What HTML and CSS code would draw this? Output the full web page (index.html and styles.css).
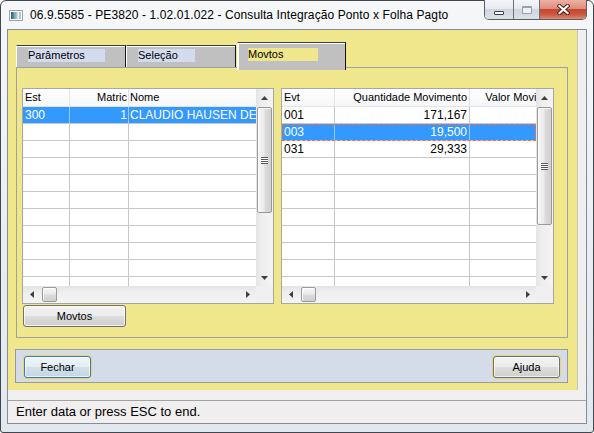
FILE: index.html
```html
<!DOCTYPE html>
<html lang="pt">
<head>
<meta charset="utf-8">
<title>Consulta Integração Ponto x Folha Pagto</title>
<link rel="stylesheet" href="styles.css">
</head>
<body>
<div class="window">
  <div class="titlebar">
    <svg class="app-icon" width="14" height="11" viewBox="0 0 14 11">
      <defs>
        <linearGradient id="ig" x1="0" y1="0" x2="1" y2="0">
          <stop offset="0" stop-color="#245e73"/>
          <stop offset="1" stop-color="#c4e6ea"/>
        </linearGradient>
      </defs>
      <rect x="0.5" y="0.5" width="13" height="10" fill="#fdfdfd" stroke="#9aa3ab"/>
      <rect x="2" y="2" width="7" height="7" fill="url(#ig)"/>
      <rect x="10" y="2" width="2" height="7" fill="#b9c3cb"/>
    </svg>
    <span class="title">06.9.5585 - PE3820 - 1.02.01.022 - Consulta Integração Ponto x Folha Pagto</span>
    <div class="controls">
      <div class="ctl ctl-min"><span class="glyph-min"></span></div>
      <div class="ctl ctl-max"><span class="glyph-max"></span></div>
      <div class="ctl ctl-close">
        <svg width="13" height="11" viewBox="0 0 13 11">
          <path d="M2.5 2 L10.5 9 M10.5 2 L2.5 9" stroke="#4b2019" stroke-width="4.2" stroke-linecap="square"/>
          <path d="M2.5 2 L10.5 9 M10.5 2 L2.5 9" stroke="#ffffff" stroke-width="2.2" stroke-linecap="square"/>
        </svg>
      </div>
    </div>
  </div>

  <div class="client">
    <div class="main-row">
      <div class="yellow">
        <div class="tabs">
          <div class="tab tab-1"><span class="tab-label lbl-1">Parâmetros</span></div>
          <div class="tab tab-2"><span class="tab-label lbl-2">Seleção</span></div>
          <div class="tab tab-active"><span class="tab-label lbl-3">Movtos</span></div>
        </div>

        <div class="page">
          <div class="left-col">
            <div class="grid grid-left">
              <div class="grid-top">
                <div class="table">
                  <div class="hrow">
                    <div class="cell c-est">Est</div>
                    <div class="cell c-mat r">Matric</div>
                    <div class="cell c-nome">Nome</div>
                  </div>
                  <div class="row sel">
                    <div class="cell c-est">300</div>
                    <div class="cell c-mat r">1</div>
                    <div class="cell c-nome">CLAUDIO HAUSEN DE</div>
                  </div>
                  <div class="row"><div class="cell c-est"></div><div class="cell c-mat"></div><div class="cell c-nome"></div></div>
                  <div class="row"><div class="cell c-est"></div><div class="cell c-mat"></div><div class="cell c-nome"></div></div>
                  <div class="row"><div class="cell c-est"></div><div class="cell c-mat"></div><div class="cell c-nome"></div></div>
                  <div class="row"><div class="cell c-est"></div><div class="cell c-mat"></div><div class="cell c-nome"></div></div>
                  <div class="row"><div class="cell c-est"></div><div class="cell c-mat"></div><div class="cell c-nome"></div></div>
                  <div class="row"><div class="cell c-est"></div><div class="cell c-mat"></div><div class="cell c-nome"></div></div>
                  <div class="row"><div class="cell c-est"></div><div class="cell c-mat"></div><div class="cell c-nome"></div></div>
                  <div class="row"><div class="cell c-est"></div><div class="cell c-mat"></div><div class="cell c-nome"></div></div>
                  <div class="row"><div class="cell c-est"></div><div class="cell c-mat"></div><div class="cell c-nome"></div></div>
                  <div class="row"><div class="cell c-est"></div><div class="cell c-mat"></div><div class="cell c-nome"></div></div>
                </div>
                <div class="vscroll">
                  <div class="sb-btn"><svg width="7" height="4" viewBox="0 0 7 4"><path d="M0 4 L3.5 0 L7 4Z" fill="#3f3f3f"/></svg></div>
                  <div class="vtrack"><div class="thumb thumb-l"><span class="grip-v"></span></div></div>
                  <div class="sb-btn"><svg width="7" height="4" viewBox="0 0 7 4"><path d="M0 0 L3.5 4 L7 0Z" fill="#3f3f3f"/></svg></div>
                </div>
              </div>
              <div class="grid-bottom">
                <div class="hscroll">
                  <div class="hbtn"><svg width="4" height="7" viewBox="0 0 4 7"><path d="M4 0 L0 3.5 L4 7Z" fill="#3f3f3f"/></svg></div>
                  <div class="htrack"><div class="hthumb"></div></div>
                  <div class="hbtn"><svg width="4" height="7" viewBox="0 0 4 7"><path d="M0 0 L4 3.5 L0 7Z" fill="#3f3f3f"/></svg></div>
                </div>
                <div class="corner"></div>
              </div>
            </div>
            <button class="btn btn-movtos">Movtos</button>
          </div>

          <div class="grid grid-right">
            <div class="grid-top">
              <div class="table">
                <div class="hrow">
                  <div class="cell c-evt">Evt</div>
                  <div class="cell c-qtd r">Quantidade Movimento</div>
                  <div class="cell c-val r">Valor Movimento</div>
                </div>
                <div class="row">
                  <div class="cell c-evt">001</div>
                  <div class="cell c-qtd r">171,167</div>
                  <div class="cell c-val r"></div>
                </div>
                <div class="row sel focus">
                  <div class="cell c-evt">003</div>
                  <div class="cell c-qtd r">19,500</div>
                  <div class="cell c-val r"></div>
                </div>
                <div class="row">
                  <div class="cell c-evt">031</div>
                  <div class="cell c-qtd r">29,333</div>
                  <div class="cell c-val r"></div>
                </div>
                <div class="row"><div class="cell c-evt"></div><div class="cell c-qtd"></div><div class="cell c-val"></div></div>
                <div class="row"><div class="cell c-evt"></div><div class="cell c-qtd"></div><div class="cell c-val"></div></div>
                <div class="row"><div class="cell c-evt"></div><div class="cell c-qtd"></div><div class="cell c-val"></div></div>
                <div class="row"><div class="cell c-evt"></div><div class="cell c-qtd"></div><div class="cell c-val"></div></div>
                <div class="row"><div class="cell c-evt"></div><div class="cell c-qtd"></div><div class="cell c-val"></div></div>
                <div class="row"><div class="cell c-evt"></div><div class="cell c-qtd"></div><div class="cell c-val"></div></div>
                <div class="row"><div class="cell c-evt"></div><div class="cell c-qtd"></div><div class="cell c-val"></div></div>
                <div class="row"><div class="cell c-evt"></div><div class="cell c-qtd"></div><div class="cell c-val"></div></div>
              </div>
              <div class="vscroll">
                <div class="sb-btn"><svg width="7" height="4" viewBox="0 0 7 4"><path d="M0 4 L3.5 0 L7 4Z" fill="#3f3f3f"/></svg></div>
                <div class="vtrack"><div class="thumb thumb-r"><span class="grip-v"></span></div></div>
                <div class="sb-btn"><svg width="7" height="4" viewBox="0 0 7 4"><path d="M0 0 L3.5 4 L7 0Z" fill="#3f3f3f"/></svg></div>
              </div>
            </div>
            <div class="grid-bottom">
              <div class="hscroll">
                <div class="hbtn"><svg width="4" height="7" viewBox="0 0 4 7"><path d="M4 0 L0 3.5 L4 7Z" fill="#3f3f3f"/></svg></div>
                <div class="htrack"><div class="hthumb"></div></div>
                <div class="hbtn"><svg width="4" height="7" viewBox="0 0 4 7"><path d="M0 0 L4 3.5 L0 7Z" fill="#3f3f3f"/></svg></div>
              </div>
              <div class="corner"></div>
            </div>
          </div>
        </div>

        <div class="panel">
          <button class="btn btn-dlg btn-focus">Fechar</button>
          <button class="btn btn-dlg">Ajuda</button>
        </div>
      </div>
      <div class="side"></div>
    </div>
    <div class="gap"></div>
    <div class="status">Enter data or press ESC to end.</div>
  </div>
</div>
</body>
</html>
```

FILE: styles.css
```css
html, body {
  margin: 0;
  padding: 0;
}
body {
  width: 594px;
  height: 433px;
  overflow: hidden;
  background: #ffffff;
  font-family: "Liberation Sans", Arial, sans-serif;
  color: #000;
}

/* ---------- window frame ---------- */
.window {
  box-sizing: border-box;
  width: 594px;
  height: 433px;
  border: 1px solid #41474c;
  border-radius: 6px 6px 3px 3px;
  background: linear-gradient(#f5f7f9, #e9edf2 60%, #e2e8ee);
  padding: 0 6px 8px;
  display: flex;
  flex-direction: column;
}

.titlebar {
  height: 28px;
  margin: 0 -6px;
  display: flex;
  align-items: center;
  flex: none;
}
.app-icon {
  flex: none;
  margin-left: 8px;
  display: block;
}
.title {
  margin-left: 7px;
  font-size: 12px;
  letter-spacing: 0.1px;
  white-space: nowrap;
  color: #000;
}

.controls {
  margin-left: auto;
  margin-right: 6px;
  margin-top: -1px;
  align-self: flex-start;
  display: flex;
  height: 20px;
  box-sizing: border-box;
  border: 1px solid #5a5e63;
  border-top: none;
  border-radius: 0 0 5px 5px;
  overflow: hidden;
  flex: none;
}
.ctl {
  display: flex;
  align-items: center;
  justify-content: center;
}
.ctl-min,
.ctl-max {
  border-right: 1px solid #6c7177;
  background: linear-gradient(#f4f6f9, #e6eaef 45%, #cfd6df 50%, #dbe1e8);
}
.ctl-min { width: 28px; }
.ctl-max { width: 25px; }
.ctl-close {
  width: 46px;
  background: linear-gradient(#ebb3a5, #de8c7b 45%, #c9472f 50%, #c9553f 75%, #e08a74);
}
.glyph-min {
  box-sizing: border-box;
  width: 10px;
  height: 4px;
  margin-top: 6px;
  background: #fff;
  border: 1px solid #3b4046;
  border-radius: 1px;
}
.glyph-max {
  box-sizing: border-box;
  width: 10px;
  height: 8px;
  border: 1px solid #98a1aa;
  border-top-width: 2px;
  background: #eef1f4;
  border-radius: 1px;
}
.ctl-close svg { display: block; }

/* ---------- client ---------- */
.client {
  flex: 1;
  border: 1px solid #858c93;
  background: #f0f0f0;
  display: flex;
  flex-direction: column;
  min-height: 0;
}
.main-row {
  height: 360px;
  flex: none;
  display: flex;
}
.yellow {
  box-sizing: border-box;
  width: 569px;
  flex: none;
  background: #f0e68c;
  padding: 12px 0 0 8px;
  display: flex;
  flex-direction: column;
}
.side {
  flex: 1;
  border-left: 1px solid #c4c4c4;
  background: #f0f0f0;
}
.gap {
  height: 10px;
  flex: none;
}
.status {
  flex: 1;
  border-top: 1px solid #a3a3a3;
  background: #f0eeee;
  font-size: 13px;
  line-height: 22px;
  padding-left: 8px;
  white-space: nowrap;
}

/* ---------- tabs ---------- */
.tabs {
  display: flex;
  align-items: flex-end;
  height: 25px;
  flex: none;
}
.tab {
  box-sizing: border-box;
  height: 22px;
  background: #c0c0c0;
  border-top: 1px solid #3c3c3c;
  border-left: 1px solid #ffffff;
  border-right: 1px solid #151515;
  box-shadow: inset 0 1px 0 #ffffff;
  padding: 3px 0 0 11px;
  flex: none;
}
.tab-1 { width: 110px; }
.tab-2 { width: 110px; }
.tab-active {
  width: 109px;
  height: 28px;
  margin-left: 1px;
  margin-bottom: -3px;
  padding: 5px 0 0 10px;
  position: relative;
  z-index: 1;
  box-shadow: inset 1px 1px 0 #ffffff;
}
.tab-label {
  display: block;
  height: 13px;
  line-height: 13px;
  font-size: 11px;
  background: #d3dcef;
  white-space: nowrap;
}
.lbl-1 { width: 77px; }
.lbl-2 { width: 57px; }
.lbl-3 { width: 70px; background: #f0e68c; }

/* ---------- tab page ---------- */
.page {
  box-sizing: border-box;
  width: 552px;
  height: 271px;
  flex: none;
  border: 1px solid #a0a0a0;
  padding: 20px 0 0 5px;
  display: flex;
  align-items: flex-start;
}
.left-col {
  width: 252px;
  flex: none;
  display: flex;
  flex-direction: column;
  align-items: flex-start;
}

/* ---------- grids ---------- */
.grid {
  box-sizing: border-box;
  height: 216px;
  flex: none;
  border: 1px solid #a6a6a6;
  background: #ffffff;
  display: flex;
  flex-direction: column;
}
.grid-left { width: 252px; }
.grid-right { width: 273px; margin-left: 7px; }

.grid-top {
  height: 197px;
  flex: none;
  display: flex;
}
.table {
  flex: 1;
  min-width: 0;
  overflow: hidden;
}
.hrow {
  display: flex;
  height: 17px;
  border-bottom: 1px solid #e3e3e3;
  background: linear-gradient(#ffffff, #f6f7f8);
}
.row {
  display: flex;
  height: 16px;
  border-bottom: 1px solid #c7c7c7;
}
.cell {
  flex: none;
  box-sizing: border-box;
  height: 100%;
  border-right: 1px solid #c7c7c7;
  padding: 0 2px;
  overflow: hidden;
  white-space: nowrap;
  font-size: 12px;
  line-height: 16px;
}
.hrow .cell {
  font-size: 11px;
  line-height: 17px;
  border-right-color: #e4e4e4;
}
.r { text-align: right; }
.c-est { width: 47px; }
.c-mat { width: 59px; padding-right: 1px; }
.c-nome { width: 200px; border-right: none; padding-left: 1px; }
.c-evt { width: 53px; }
.c-qtd { width: 135px; }
.c-val { width: 99px; border-right: none; }

.row.sel {
  background: #3399ff;
  color: #ffffff;
}
.row.sel .cell { border-right-color: #9ccaff; }
.row.focus {
  outline: 1px dashed #ff6a3d;
  outline-offset: -1px;
}

/* ---------- scrollbars ---------- */
.vscroll {
  width: 17px;
  flex: none;
  display: flex;
  flex-direction: column;
  background: linear-gradient(to right, #e4e4e4, #eeeeee 35%, #f4f4f4);
}
.sb-btn {
  height: 17px;
  flex: none;
  display: flex;
  align-items: center;
  justify-content: center;
}
.sb-btn svg,
.hbtn svg { display: block; }
.vtrack {
  flex: 1;
}
.thumb {
  box-sizing: border-box;
  width: 15px;
  margin: 1px 0 0 1px;
  border: 1px solid #9a9a9a;
  border-radius: 2px;
  background: linear-gradient(to right, #f6f6f6, #ebebeb 45%, #dbdbdb 55%, #d0d0d0);
  box-shadow: inset 1px 1px 0 #ffffff;
  display: flex;
  align-items: center;
  justify-content: center;
}
.thumb-l { height: 106px; }
.thumb-r { height: 118px; }
.grip-v {
  width: 7px;
  height: 7px;
  background: repeating-linear-gradient(#5a5a5a 0 1px, #fafafa 1px 2px);
}

.grid-bottom {
  height: 17px;
  flex: none;
  display: flex;
}
.hscroll {
  flex: 1;
  display: flex;
  background: linear-gradient(#e4e4e4, #eeeeee 35%, #f4f4f4);
}
.hbtn {
  width: 17px;
  flex: none;
  display: flex;
  align-items: center;
  justify-content: center;
}
.htrack { flex: 1; }
.hthumb {
  box-sizing: border-box;
  width: 15px;
  height: 15px;
  margin: 1px 0 0 2px;
  border: 1px solid #9a9a9a;
  border-radius: 2px;
  background: linear-gradient(#f6f6f6, #ebebeb 45%, #dbdbdb 55%, #d0d0d0);
  box-shadow: inset 1px 1px 0 #ffffff;
}
.corner {
  width: 17px;
  flex: none;
  background: #f0f0f0;
}

/* ---------- buttons ---------- */
.btn {
  box-sizing: border-box;
  font-family: "Liberation Sans", Arial, sans-serif;
  font-size: 11px;
  color: #000;
  border: 1px solid #707070;
  border-radius: 3px;
  background: linear-gradient(#f2f2f2, #ebebeb 50%, #dddddd 50%, #cfcfcf);
  box-shadow: inset 0 0 0 1px rgba(255, 255, 255, 0.7);
  padding: 0;
  margin: 0;
  line-height: 18px;
}
.btn-movtos {
  width: 103px;
  height: 22px;
  margin: 1px 0 0 1px;
}
.panel {
  box-sizing: border-box;
  width: 553px;
  height: 34px;
  flex: none;
  margin: 11px 0 0 -1px;
  border: 1px solid #9a9a9a;
  background: #d4dcea;
  padding: 6px 7px 0 8px;
  display: flex;
  justify-content: space-between;
  align-items: flex-start;
}
.btn-dlg {
  width: 67px;
  height: 22px;
  box-shadow: 0 0 0 1px #ead46c, inset 0 0 0 1px rgba(255, 255, 255, 0.7);
}
.btn-focus {
  border-color: #3d7bab;
  background: linear-gradient(#eef5fa, #e3edf4 50%, #d1dfe9 50%, #c5d7e4);
}
```
